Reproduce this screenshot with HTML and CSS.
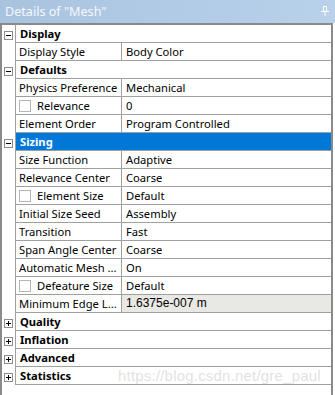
FILE: index.html
```html
<!DOCTYPE html>
<html lang="en">
<head>
    <meta charset="UTF-8">
    <meta name="viewport" content="width=device-width, initial-scale=1.0">
    <title>Details of "Mesh"</title>
    <link rel="stylesheet" href="styles.css">
</head>
<body>
    <div class="panel">
        <div class="titlebar">
            <span class="title">Details of "Mesh"</span>
            <svg class="pin" width="8" height="10" viewBox="0 0 8 10">
                <path d="M2.5 0.5h3v5h-3z M0 5.5h8 M4 5.5v4.5" fill="none" stroke="#fff" stroke-width="1"/>
            </svg>
        </div>
        <div class="grid">
            <div class="row cat"><span class="tog"><i class="box minus"></i></span><div class="cell span">Display</div></div>
            <div class="row"><span class="tog"></span><div class="cell name">Display Style</div><div class="cell val">Body Color</div></div>
            <div class="row cat"><span class="tog"><i class="box minus"></i></span><div class="cell span">Defaults</div></div>
            <div class="row"><span class="tog"></span><div class="cell name">Physics Preference</div><div class="cell val">Mechanical</div></div>
            <div class="row"><span class="tog"></span><div class="cell name"><i class="check"></i>Relevance</div><div class="cell val">0</div></div>
            <div class="row"><span class="tog"></span><div class="cell name">Element Order</div><div class="cell val">Program Controlled</div></div>
            <div class="row cat selected"><span class="tog"><i class="box minus"></i></span><div class="cell span">Sizing</div></div>
            <div class="row"><span class="tog"></span><div class="cell name">Size Function</div><div class="cell val">Adaptive</div></div>
            <div class="row"><span class="tog"></span><div class="cell name">Relevance Center</div><div class="cell val">Coarse</div></div>
            <div class="row"><span class="tog"></span><div class="cell name"><i class="check"></i>Element Size</div><div class="cell val">Default</div></div>
            <div class="row"><span class="tog"></span><div class="cell name">Initial Size Seed</div><div class="cell val">Assembly</div></div>
            <div class="row"><span class="tog"></span><div class="cell name">Transition</div><div class="cell val">Fast</div></div>
            <div class="row"><span class="tog"></span><div class="cell name">Span Angle Center</div><div class="cell val">Coarse</div></div>
            <div class="row"><span class="tog"></span><div class="cell name">Automatic Mesh ...</div><div class="cell val">On</div></div>
            <div class="row"><span class="tog"></span><div class="cell name"><i class="check"></i>Defeature Size</div><div class="cell val">Default</div></div>
            <div class="row"><span class="tog"></span><div class="cell name">Minimum Edge L...</div><div class="cell val readonly">1.6375e-007 m</div></div>
            <div class="row cat"><span class="tog"><i class="box plus"></i></span><div class="cell span">Quality</div></div>
            <div class="row cat"><span class="tog"><i class="box plus"></i></span><div class="cell span">Inflation</div></div>
            <div class="row cat"><span class="tog"><i class="box plus"></i></span><div class="cell span">Advanced</div></div>
            <div class="row cat"><span class="tog"><i class="box plus"></i></span><div class="cell span">Statistics</div></div>
            <div class="watermark">https://blog.csdn.net/gre_paul</div>
        </div>
    </div>
</body>
</html>
```

FILE: styles.css
```css
body {
    margin: 0;
    padding: 0;
    background-color: white;
    font-family: "Noto Sans", Arial, sans-serif;
    font-size: 11.2px;
    color: #000;
}
.panel {
    width: 335px;
    height: 395px;
    overflow: hidden;
}
.titlebar {
    height: 23px;
    background: linear-gradient(to right, #a9c3df, #b9d1eb);
    display: flex;
    align-items: center;
    justify-content: space-between;
    padding: 0 5px 0 5px;
    box-sizing: border-box;
}
.title {
    color: #f4f7fb;
    font-size: 12.6px;
    line-height: 23px;
}
.pin {
    margin-right: 1px;
    margin-top: -2px;
}
.grid {
    position: relative;
    width: 333px;
    height: 372px;
    box-sizing: border-box;
    border-left: 2px solid #8a8a8a;
    border-right: 2px solid #8a8a8a;
    border-top: 2px solid #8a8a8a;
}
.row {
    display: grid;
    grid-template-columns: 13px 106px 1fr;
    height: 18px;
}
.tog {
    display: flex;
    align-items: center;
    justify-content: center;
    padding-top: 2px;
    box-sizing: border-box;
}
.box {
    position: relative;
    width: 7px;
    height: 7px;
    border: 1px solid #8c8c8c;
    background: white;
}
.box::before {
    content: "";
    position: absolute;
    left: 1px;
    top: 3px;
    width: 5px;
    height: 1px;
    background: #000;
}
.plus::after {
    content: "";
    position: absolute;
    left: 3px;
    top: 1px;
    width: 1px;
    height: 5px;
    background: #000;
}
.cell {
    border-left: 1px solid #a0a0a0;
    border-bottom: 1px solid #a0a0a0;
    line-height: 17px;
    white-space: nowrap;
    overflow: hidden;
    display: flex;
    align-items: center;
}
.name {
    padding-left: 3px;
}
.val {
    padding-left: 4px;
}
.span {
    grid-column: 2 / 4;
    padding-left: 4px;
    font-weight: bold;
}
.selected .span {
    background-color: #0078d7;
    color: white;
}
.check {
    width: 10px;
    height: 10px;
    border: 1px solid #b4b4b4;
    background: white;
    margin-right: 6px;
    margin-left: 0;
}
.readonly {
    background-color: #e8e8e4;
    font-family: "Liberation Sans", Arial, sans-serif;
    font-size: 12px;
}
.watermark {
    position: absolute;
    left: 116px;
    top: 342px;
    font-family: "Liberation Sans", Arial, sans-serif;
    font-size: 15px;
    color: rgba(200, 200, 200, 0.55);
    letter-spacing: 0.2px;
}
```
